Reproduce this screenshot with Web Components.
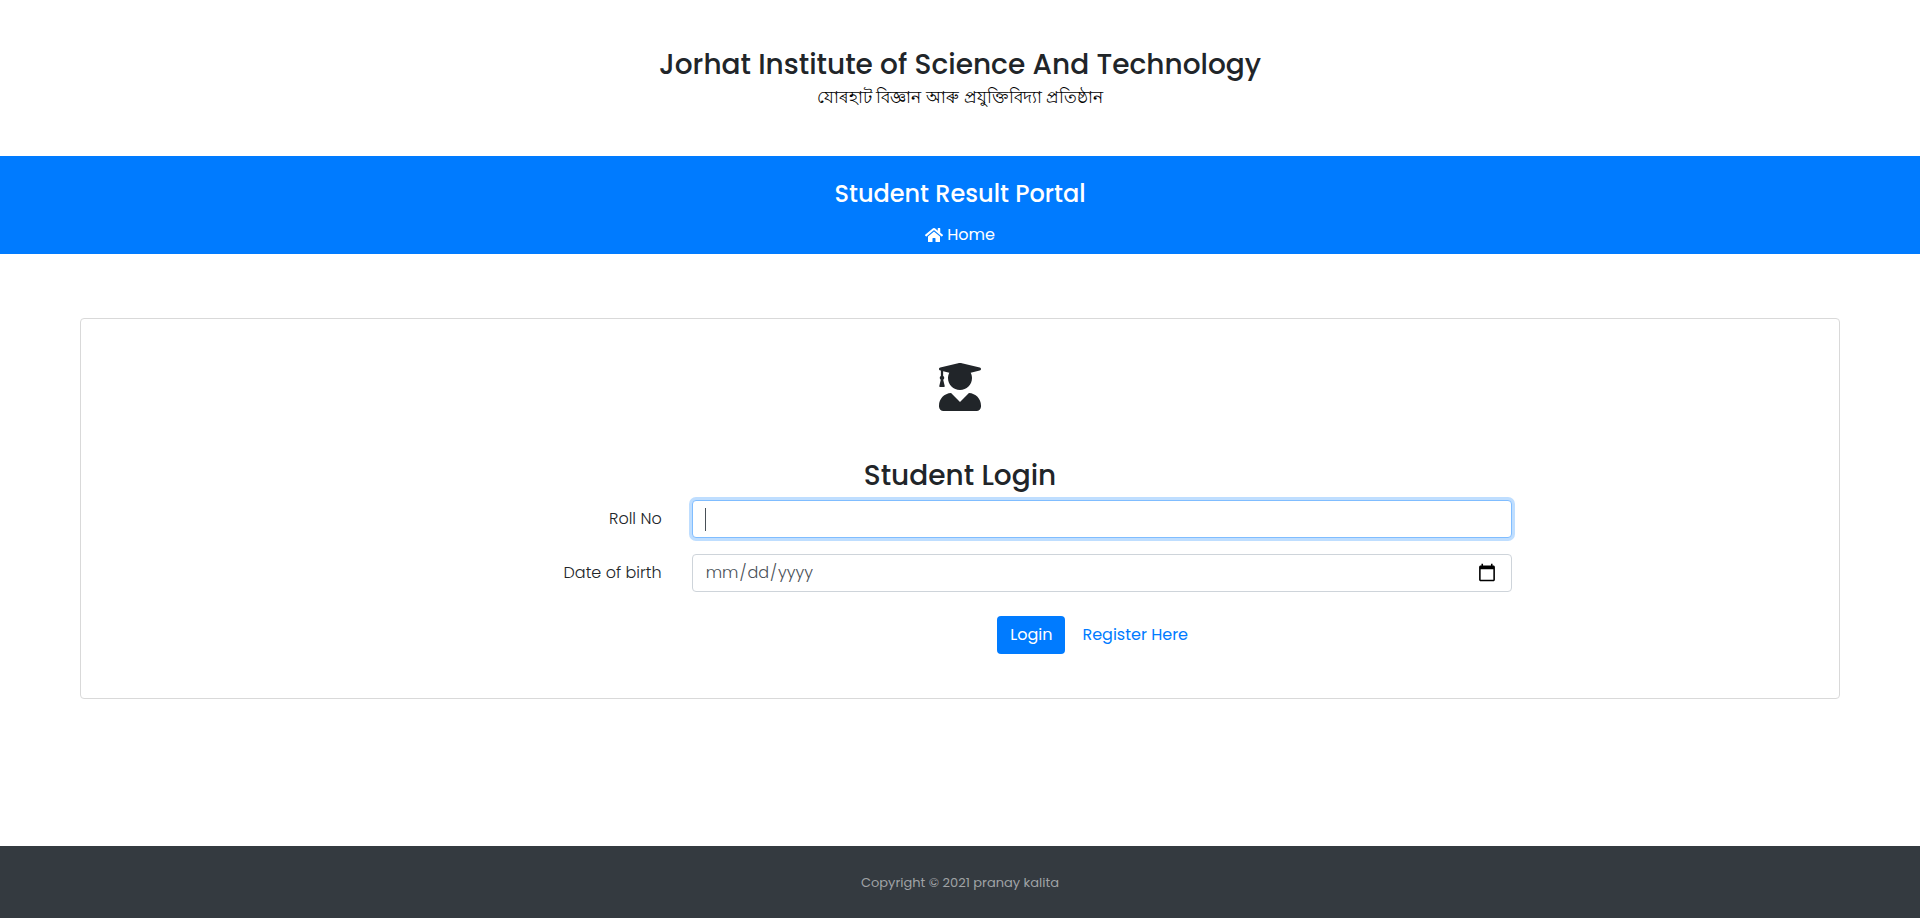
<!DOCTYPE html>
<html lang="en">
<head>
<meta charset="utf-8">
<meta name="viewport" content="width=device-width, initial-scale=1">
<title>Student Result Portal</title>
<style>
body{margin:0;background:#fff;color:#212529;font:400 16px/24px Poppins,Inter,"Noto Sans",sans-serif}
</style>
</head>
<body>
<portal-page>
  <site-header slot="header">
    Jorhat Institute of Science And Technology
    <span slot="local" lang="as">যোৰহাট বিজ্ঞান আৰু প্ৰযুক্তিবিদ্যা প্ৰতিষ্ঠান</span>
  </site-header>
  <site-nav slot="header">Student Result Portal</site-nav>
  <login-card>Student Login</login-card>
  <site-footer slot="footer">Copyright © 2021 pranay kalita</site-footer>
</portal-page>
<script>
const component = (name, html, ready) => customElements.define(name, class extends HTMLElement {
  constructor() {
    super();
    this.attachShadow({ mode: "open" }).innerHTML = html;
  }
  connectedCallback() { if (ready) ready(this.shadowRoot); }
});

component("portal-page", `
<style>
:host{display:flex;flex-direction:column;min-height:100vh}
main{flex:1;padding:64px 80px;box-sizing:border-box}
</style>
<slot name="header"></slot><main><slot></slot></main><slot name="footer"></slot>`);

component("site-header", `
<style>
:host{display:block;padding:48px 16px 44px;text-align:center}
h1{margin:0;font-size:28px;line-height:34px;font-weight:500}
p{margin:0;font-size:17px;line-height:30px;font-weight:300;color:#000}
</style>
<header><h1><slot></slot></h1><p><slot name="local"></slot></p></header>`);

component("site-nav", `
<style>
:host{display:block;background:#007bff;color:#fff;text-align:center;padding:24px 16px 7px}
nav{display:flex;flex-direction:column;align-items:center;gap:15px}
h2{margin:0;font-size:24px;line-height:28px;font-weight:500}
a{display:flex;align-items:center;gap:4px;color:inherit;text-decoration:none}
svg{width:18px;height:16px;fill:currentColor}
</style>
<nav><h2><slot></slot></h2>
<a href="#home"><svg viewBox="0 0 576 512" aria-hidden="true"><path d="M280.37 148.26L96 300.11V464a16 16 0 0 0 16 16l112.06-.29a16 16 0 0 0 15.92-16V368a16 16 0 0 1 16-16h64a16 16 0 0 1 16 16v95.64a16 16 0 0 0 16 16.05L464 480a16 16 0 0 0 16-16V300L295.67 148.26a12.19 12.19 0 0 0-15.3 0zM571.6 251.47L488 182.56V44.05a12 12 0 0 0-12-12h-56a12 12 0 0 0-12 12v72.61L318.47 43a48 48 0 0 0-61 0L4.34 251.47a12 12 0 0 0-1.6 16.9l25.5 31A12 12 0 0 0 45.15 301l235.22-193.74a12.19 12.19 0 0 1 15.3 0L530.9 301a12 12 0 0 0 16.9-1.6l25.5-31a12 12 0 0 0-1.7-16.93z"/></svg><span>Home</span></a></nav>`);

component("login-card", `
<style>
:host{display:block;border:1px solid #d9d9d9;border-radius:4px;padding:44px 29px}
svg{display:block;width:42px;height:48px;margin:0 auto 47px;fill:currentColor}
h2{margin:0 0 6px;font-size:28px;line-height:36px;font-weight:500;text-align:center}
form{display:grid;grid-template-columns:4fr 6fr 2fr;row-gap:16px}
label{grid-column:1;text-align:right;padding:7px 15px;font-weight:300}
.field{grid-column:2;padding:0 15px}
input{display:block;box-sizing:border-box;width:100%;height:38px;padding:6px 12px;border:1px solid #ced4da;border-radius:4px;background:#fff;color:#495057;font:inherit;font-weight:300;outline:0}
input:focus{border-color:#80bdff;box-shadow:0 0 0 3px #bfdeff}
/* steady caret while the focused field is empty */
input[type=text]:focus:placeholder-shown{caret-color:transparent;background:linear-gradient(#495057,#495057) 12px 7px/1px 23px no-repeat #fff}
input::-webkit-calendar-picker-indicator{width:20px;height:20px}
.actions{grid-column:2;display:flex;justify-content:center;align-items:center;gap:17px;padding:8px 18px 0 0}
button{height:38px;padding:0 13px;border:0;border-radius:4px;background:#007bff;color:#fff;font:inherit}
a{color:#007bff;text-decoration:none}
</style>
<svg viewBox="0 0 448 512" aria-hidden="true"><path d="M319.4 320.6L224 416l-95.4-95.4C57.1 323.7 0 382.2 0 454.4v9.6c0 26.5 21.5 48 48 48h352c26.5 0 48-21.5 48-48v-9.6c0-72.2-57.1-130.7-128.6-133.8zM13.6 79.8l6.4 1.5v58.4c-7 4.2-12 11.5-12 20.3 0 8.4 4.6 15.4 11.1 19.7L3.5 242c-1.7 6.9 2.1 14 7.6 14h41.8c5.5 0 9.3-7.1 7.6-14l-15.6-62.3C51.4 175.4 56 168.4 56 160c0-8.8-5-16.1-12-20.3V87.1l66 15.9c-8.6 17.2-14 36.4-14 57 0 70.7 57.3 128 128 128s128-57.3 128-128c0-20.6-5.3-39.8-14-57l96.3-23.2c18.2-4.4 18.2-27.1 0-31.5l-190.4-46c-13-3.1-26.7-3.1-39.7 0L13.6 48.2c-18.1 4.4-18.1 27.2 0 31.6z"/></svg>
<h2><slot></slot></h2>
<form>
<label for="roll">Roll No</label><div class="field"><input id="roll" type="text" placeholder=" " autofocus></div>
<label for="dob">Date of birth</label><div class="field"><input id="dob" type="date"></div>
<div class="actions"><button type="submit">Login</button><a href="#register">Register Here</a></div>
</form>`, root => root.getElementById("roll").focus());

component("site-footer", `
<style>
:host{display:block;background:#343a40;color:#a0a3a6;text-align:center;padding:25px 16px 23px;font-size:13px}
</style>
<footer><slot></slot></footer>`);
</script>
</body>
</html>
